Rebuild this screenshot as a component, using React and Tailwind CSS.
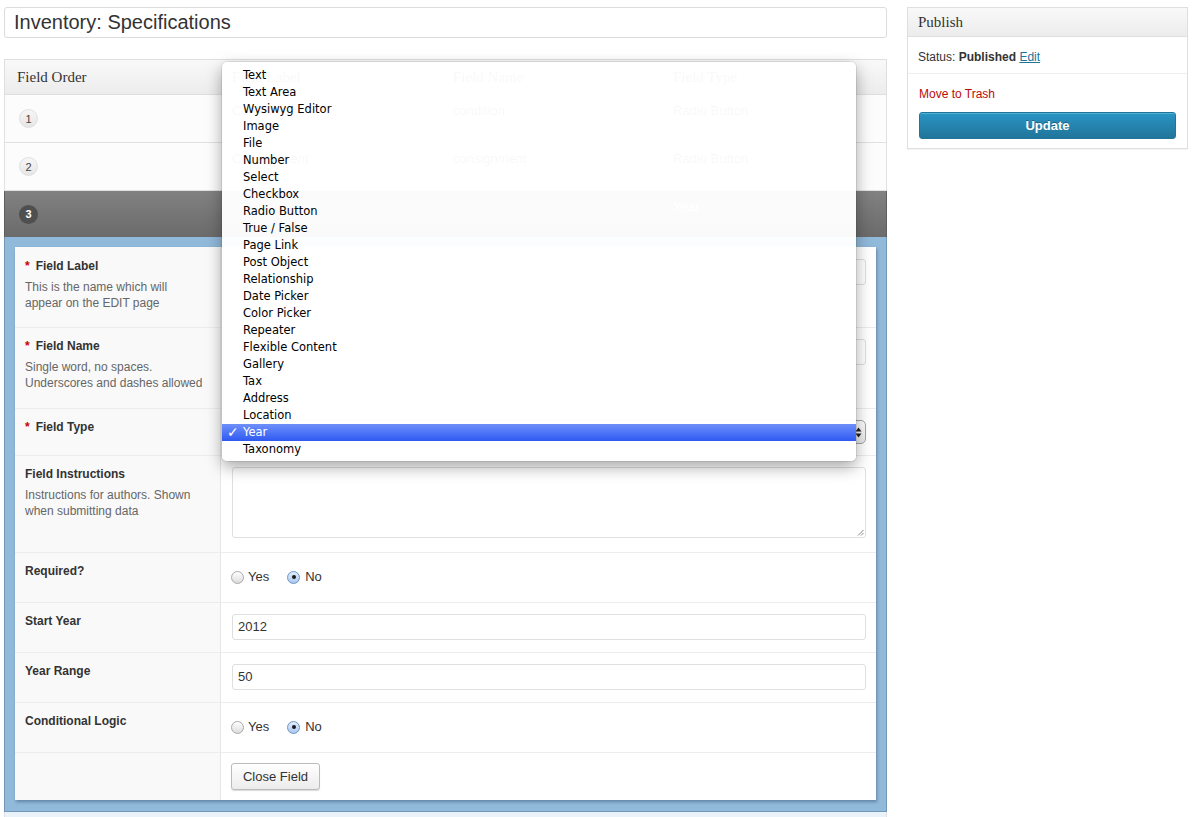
import React from 'react';

const fieldTypes = [
  'Text', 'Text Area', 'Wysiwyg Editor', 'Image', 'File', 'Number', 'Select', 'Checkbox',
  'Radio Button', 'True / False', 'Page Link', 'Post Object', 'Relationship', 'Date Picker',
  'Color Picker', 'Repeater', 'Flexible Content', 'Gallery', 'Tax', 'Address', 'Location',
  'Year', 'Taxonomy',
];

const sans = "[font-family:'Liberation_Sans',Arial,sans-serif]";
const serif = "[font-family:'Liberation_Serif',Georgia,serif]";

const Radio = ({ checked }) => (
  <span
    className={`inline-flex items-center justify-center w-[13px] h-[13px] rounded-full border ${
      checked
        ? 'border-[#6f93c4] bg-gradient-to-b from-[#e3eefc] to-[#a8c8ef]'
        : 'border-[#a9a9a9] bg-gradient-to-b from-white to-[#dcdcdc]'
    }`}
  >
    {checked && <span className="w-[4px] h-[4px] rounded-full bg-[#1a1a1a]" />}
  </span>
);

const YesNo = () => (
  <div className="flex items-center text-[13px] text-[#333] leading-[16px] pt-[16px] -ml-[1px]">
    <Radio />
    <span className="ml-[4px]">Yes</span>
    <span className="ml-[18px]" />
    <Radio checked />
    <span className="ml-[5px]">No</span>
  </div>
);

const TextInput = ({ value }) => (
  <div className="h-[26px] border border-[#dfdfdf] rounded-[3px] bg-white px-[5px] text-[13px] leading-[24px] text-[#333]">
    {value}
  </div>
);

const Label = ({ required, children, desc }) => (
  <div className="pl-[10px] pr-[8px]">
    <div className="text-[12px] font-bold leading-[16px] text-[#333]">
      {required && <span className="text-[#c00] mr-[6px]">*</span>}
      {children}
    </div>
    {desc && (
      <div className="mt-[5px] text-[12px] leading-[16px] text-[#666]">
        {desc.map((l) => (
          <div key={l}>{l}</div>
        ))}
      </div>
    )}
  </div>
);

const Row = ({ h, first, label, children }) => (
  <div className={`grid grid-cols-[206px_1fr] ${h} ${first ? '' : 'border-t border-[#ececec]'}`}>
    <div className={`bg-[#f9f9f9] border-r border-[#e6e6e6] ${first ? 'pt-[11px]' : 'pt-[10px]'}`}>{label}</div>
    <div className="pl-[11px] pr-[10px]">{children}</div>
  </div>
);

const ListRow = ({ n, label, name, type }) => (
  <div className="grid grid-cols-[217px_221px_220px_1fr] h-[48px] border-x border-b border-[#e1e1e1] bg-[#fcfcfc] text-[13px] leading-[16px] text-[#333]">
    <div className="pl-[14px] flex items-center">
      <span className="w-[19px] h-[19px] rounded-full bg-gradient-to-b from-[#f7f7f7] to-[#e6e6e6] border border-[#e0e0e0] text-[11px] flex items-center justify-center text-[#444]">
        {n}
      </span>
    </div>
    <div className="pl-[10px] pt-[8px]">{label}</div>
    <div className="pl-[10px] pt-[8px]">{name}</div>
    <div className="pl-[10px] pt-[8px]">{type}</div>
  </div>
);

const FieldTypeMenu = () => (
  <div className="absolute left-[222px] top-[62px] w-[634px] h-[399px] rounded-[5px] bg-white/[0.97] shadow-[0_6px_16px_rgba(0,0,0,0.35),0_0_0_1px_rgba(0,0,0,0.08)] pt-[5px] [font-family:'DejaVu_Sans',sans-serif] text-[11.5px] text-black">
    {fieldTypes.map((t) =>
      t === 'Year' ? (
        <div
          key={t}
          className="relative h-[17px] leading-[17px] pl-[21px] text-white bg-gradient-to-b from-[#6f8ffa] to-[#2f58f2]"
        >
          <span className="absolute left-[5px] top-0 text-[14px] font-bold">✓</span>
          {t}
        </div>
      ) : (
        <div key={t} className="h-[17px] leading-[17px] pl-[21px]">
          {t}
        </div>
      )
    )}
  </div>
);

const App = () => {
  return (
    <div className={`relative min-h-[817px] bg-white ${sans}`}>
      <div className="flex gap-[20px] pl-[4px] pt-[7px]">
        <div className="w-[883px]">
          <div className="h-[31px] border border-[#dcdcdc] rounded-[3px] pl-[9px] text-[20px] leading-[29px] text-[#333]">
            Inventory: Specifications
          </div>

          <div className="mt-[21px]">
            <div className="grid grid-cols-[217px_221px_220px_1fr] h-[36px] border border-[#dfdfdf] bg-gradient-to-b from-[#f9f9f9] to-[#ececec] text-[15px] leading-[34px] text-[#333]">
              <div className={`pl-[12px] ${serif}`}>Field Order</div>
              <div className={`pl-[10px] ${serif}`}>Field Label</div>
              <div className={`pl-[10px] ${serif}`}>Field Name</div>
              <div className={`pl-[10px] ${serif}`}>Field Type</div>
            </div>
            <ListRow n="1" label="Condition" name="condition" type="Radio Button" />
            <ListRow n="2" label="Consignment" name="consignment" type="Radio Button" />
            <div className="grid grid-cols-[217px_221px_220px_1fr] h-[46px] border-x border-[#5e5e5e] bg-gradient-to-b from-[#818181] to-[#6b6b6b] text-[13px] leading-[16px] text-white">
              <div className="pl-[14px] flex items-center">
                <span className="w-[19px] h-[19px] rounded-full bg-[#4f4f4f] text-[11px] font-bold flex items-center justify-center">
                  3
                </span>
              </div>
              <div />
              <div />
              <div className="pl-[10px] pt-[8px]">Year</div>
            </div>

            <div className="bg-[#91b9da] border-x border-b border-[#7397b8] px-[10px] pt-[10px] pb-[11px]">
              <div className="bg-white shadow-[1px_2px_3px_rgba(40,70,100,0.45)]">
                <Row
                  h="h-[80px]"
                  first
                  label={<Label required desc={['This is the name which will', 'appear on the EDIT page']}>Field Label</Label>}
                >
                  <div className="pt-[12px]"><TextInput value="" /></div>
                </Row>
                <Row
                  h="h-[81px]"
                  label={<Label required desc={['Single word, no spaces.', 'Underscores and dashes allowed']}>Field Name</Label>}
                >
                  <div className="pt-[11px]"><TextInput value="" /></div>
                </Row>
                <Row h="h-[47px]" label={<Label required>Field Type</Label>}>
                  <div className="pt-[11px]">
                    <div className="h-[24px] rounded-[5px] border border-[#a5a5a5] bg-gradient-to-b from-white to-[#e8e8e8] flex items-center justify-end pr-[3px] text-[13px]">
                      <svg width="7" height="11" viewBox="0 0 7 11">
                        <path d="M3.5 0.5 L6.5 4.5 L0.5 4.5 Z" fill="#222" />
                        <path d="M3.5 10.5 L6.5 6.5 L0.5 6.5 Z" fill="#222" />
                      </svg>
                    </div>
                  </div>
                </Row>
                <Row
                  h="h-[97px]"
                  label={<Label desc={['Instructions for authors. Shown', 'when submitting data']}>Field Instructions</Label>}
                >
                  <div className="pt-[11px]">
                    <div className="relative h-[71px] border border-[#dfdfdf] rounded-[3px]">
                      <svg className="absolute right-[1px] bottom-[1px]" width="7" height="7" viewBox="0 0 7 7">
                        <path d="M6.5 1 L1 6.5 M6.5 4 L4 6.5" stroke="#888" strokeWidth="1" />
                      </svg>
                    </div>
                  </div>
                </Row>
                <Row h="h-[50px]" label={<Label>Required?</Label>}>
                  <YesNo />
                </Row>
                <Row h="h-[50px]" label={<Label>Start Year</Label>}>
                  <div className="pt-[11px]"><TextInput value="2012" /></div>
                </Row>
                <Row h="h-[50px]" label={<Label>Year Range</Label>}>
                  <div className="pt-[11px]"><TextInput value="50" /></div>
                </Row>
                <Row h="h-[50px]" label={<Label>Conditional Logic</Label>}>
                  <YesNo />
                </Row>
                <Row h="h-[48px]" label={null}>
                  <div className="pt-[10px]">
                    <button className="h-[27px] w-[89px] -ml-[1px] rounded-[3px] border border-[#bbb] bg-gradient-to-b from-white to-[#ececec] shadow-[0_1px_1px_rgba(0,0,0,0.15)] text-[13px] text-[#333]">
                      Close Field
                    </button>
                  </div>
                </Row>
              </div>
            </div>
            <div className="h-[40px] bg-[#eaf2fa] border-x border-[#dfdfdf]" />
          </div>
        </div>

        <div className="w-[281px] self-start border border-[#dfdfdf] bg-white shadow-[0_1px_1px_rgba(0,0,0,0.04)]">
          <div className={`h-[29px] pl-[10px] border-b border-[#dfdfdf] bg-gradient-to-b from-[#f9f9f9] to-[#ececec] text-[15px] leading-[28px] text-[#333] ${serif}`}>
            Publish
          </div>
          <div className="h-[37px] pl-[10px] pt-[12px] border-b border-[#eeeeee] text-[12px] leading-[16px] text-[#333]">
            Status: <span className="font-bold">Published</span>{' '}
            <span className="text-[#21759b] underline">Edit</span>
          </div>
          <div className="px-[11px] pt-[12px] pb-[9px]">
            <div className="text-[12px] leading-[16px] text-[#bc0b0b]">Move to Trash</div>
            <button className="mt-[10px] w-full h-[27px] rounded-[3px] border border-[#21759b] bg-gradient-to-b from-[#2a95c5] to-[#21759b] text-white text-[13px] font-bold [text-shadow:0_-1px_0_rgba(0,0,0,0.3)] shadow-[inset_0_1px_0_rgba(120,200,230,0.5)]">
              Update
            </button>
          </div>
        </div>
      </div>

      <FieldTypeMenu />
    </div>
  );
};

export default App;
